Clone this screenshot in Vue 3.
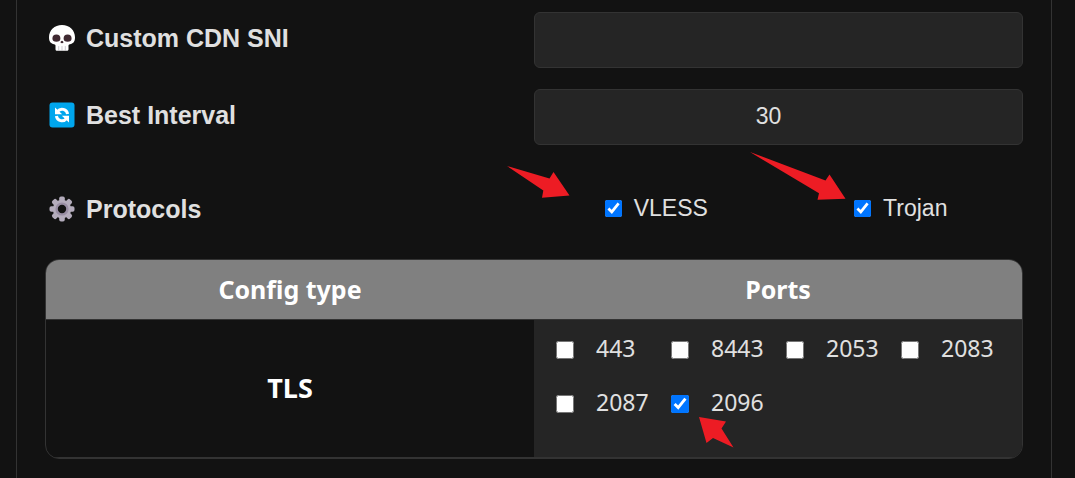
<script setup>
import { ref } from 'vue'

const cdnSni = ref('')
const bestInterval = ref('30')
const protocols = ref([
  { id: 'vless', name: 'VLESS', checked: true },
  { id: 'trojan', name: 'Trojan', checked: true },
])
const ports = ref([
  { port: '443', checked: false },
  { port: '8443', checked: false },
  { port: '2053', checked: false },
  { port: '2083', checked: false },
  { port: '2087', checked: false },
  { port: '2096', checked: true },
])
</script>

<template>
  <main class="card">
    <form class="form" @submit.prevent>
      <div class="row">
        <label class="title" for="cdn-sni">
          <svg class="icon" viewBox="0 0 26 26" aria-hidden="true">
            <path fill="#fff" d="M13 0C5.400 0 0 5.400 0 12.200c0 2.600.600 4.100 1.500 5.200 1.200 1.400 3.700 1.600 4.600 2.300.5.400.4 1.200.4 2.200v2.300c0 1 .8 1.600 1.600 1.600h9.800c.8 0 1.600-.6 1.600-1.600v-2.300c0-1-.1-1.800.4-2.200.9-.7 3.400-.9 4.600-2.300.9-1.100 1.500-2.600 1.500-5.200C26 5.400 20.600 0 13 0Z" />
            <path stroke="#b9b5bd" stroke-width=".7" stroke-linecap="round" d="M9.700 21.500v4M13 21.500v4M16.300 21.500v4" />
            <path fill="#402a32" d="M7.400 9.600a4 4 0 0 1 4 4c0 2.200-1.500 3.200-4 3.200s-4-.9-4-3.200a4 4 0 0 1 4-4ZM18.600 9.600a4 4 0 0 1 4 4c0 2.300-1.500 3.200-4 3.200s-4-1-4-3.200a4 4 0 0 1 4-4Z" />
            <path fill="#402a32" d="M13 15.800c.7 0 1.400.9 1.400 1.600s-.6 1-1.400.7c-.8.3-1.400 0-1.400-.7s.7-1.600 1.400-1.600Z" />
          </svg>
          <span>Custom CDN SNI</span>
        </label>
        <input id="cdn-sni" v-model="cdnSni" class="field" type="text" />
      </div>

      <div class="row">
        <label class="title" for="best-interval">
          <svg class="icon" viewBox="0 0 26 26" aria-hidden="true">
            <rect x=".5" y=".5" width="25" height="25" rx="3" fill="#00a6ed" />
            <g fill="none" stroke="#fff" stroke-width="3">
              <path d="M8.600 9.400A5.600 5.600 0 0 1 18.600 12" />
              <path d="M17.400 16.600A5.600 5.600 0 0 1 7.400 14" />
            </g>
            <path fill="#fff" d="M6 5.500v6.700h7.200ZM20 20.500v-6.700h-7.200Z" />
          </svg>
          <span>Best Interval</span>
        </label>
        <input id="best-interval" v-model="bestInterval" class="field numeric" type="text" inputmode="numeric" />
      </div>

      <div class="row protocols" role="group" aria-labelledby="protocols-title">
        <div id="protocols-title" class="title">
          <svg class="icon" viewBox="0 0 26 26" aria-hidden="true">
            <g fill="#b4acbc">
              <rect x="10.200" y=".5" width="5.600" height="25" rx="1.800" />
              <rect x="10.200" y=".5" width="5.600" height="25" rx="1.800" transform="rotate(45 13 13)" />
              <rect x="10.200" y=".5" width="5.600" height="25" rx="1.800" transform="rotate(90 13 13)" />
              <rect x="10.200" y=".5" width="5.600" height="25" rx="1.800" transform="rotate(135 13 13)" />
              <circle cx="13" cy="13" r="9.200" />
            </g>
            <circle cx="13" cy="13" r="5.400" fill="#121212" stroke="#998ea4" stroke-width="2.400" />
          </svg>
          <span>Protocols</span>
        </div>
        <div class="choices">
          <label v-for="item in protocols" :key="item.id" class="choice" :for="item.id">
            <input :id="item.id" v-model="item.checked" class="box" type="checkbox" />
            <span>{{ item.name }}</span>
            <svg v-if="item.id === 'vless'" class="arrow arrow-vless" viewBox="0 0 63 32" aria-hidden="true">
              <path fill="#ed1c24" d="M0 0 42.500 12.500 46.500 6 62.500 29.500 35 31.700 36.300 24.500Z" />
            </svg>
            <svg v-else class="arrow arrow-trojan" viewBox="0 0 96 48" aria-hidden="true">
              <path fill="#ed1c24" d="M0 0 75.500 28.500 79.500 22.500 95.500 46.800 67.500 47.700 69 41.300Z" />
            </svg>
          </label>
        </div>
      </div>

      <table class="ports-table">
        <thead>
          <tr>
            <th scope="col">Config type</th>
            <th scope="col">Ports</th>
          </tr>
        </thead>
        <tbody>
          <tr>
            <th scope="row" class="type">TLS</th>
            <td>
              <div class="ports">
                <label v-for="item in ports" :key="item.port" class="port" :for="`port-${item.port}`">
                  <input :id="`port-${item.port}`" v-model="item.checked" class="box" type="checkbox" />
                  <span>{{ item.port }}</span>
                  <svg v-if="item.port === '2096'" class="arrow arrow-port" viewBox="0 0 35 31" aria-hidden="true">
                    <path fill="#ed1c24" d="M0 0 27 4.500 22.500 11.500 34.500 30.500 14 21 7.500 26Z" />
                  </svg>
                </label>
              </div>
            </td>
          </tr>
        </tbody>
      </table>
    </form>
  </main>
</template>

<style>
body {
  background: #121212;
}
</style>

<style scoped>
.card {
  box-sizing: border-box;
  min-height: 100vh;
  margin: 0 23px 0 16px;
  padding: 12px 28px 18px;
  border: solid #333;
  border-width: 0 1px;
  color: #e0e0e0;
  font-family: "Liberation Sans", Arial, sans-serif;
  font-size: 23px;
}

.form {
  display: flex;
  flex-direction: column;
  gap: 21px;
}

.row {
  display: grid;
  grid-template-columns: 1fr 1fr;
  align-items: center;
}

.title {
  display: flex;
  align-items: center;
  gap: 11px;
  padding: 0 4px 4px;
  font-size: 25px;
  font-weight: bold;
  line-height: 28px;
}

.icon {
  width: 26px;
  height: 26px;
}

.field {
  box-sizing: border-box;
  width: 100%;
  height: 56px;
  padding: 0 12px 2px;
  border: 1px solid #333;
  border-radius: 6px;
  background: #252525;
  color: inherit;
  font: inherit;
  text-align: center;
}

.numeric {
  padding-right: 32px;
}

.protocols {
  min-height: 86px;
}

.protocols .title {
  padding-bottom: 0;
}

.choices {
  display: grid;
  grid-template-columns: 1fr 1fr;
  justify-items: center;
  padding-bottom: 2px;
}

.choice {
  position: relative;
  display: flex;
  align-items: center;
  gap: 12px;
  line-height: 28px;
}

.box {
  width: 17px;
  height: 17px;
  margin: 0;
}

.arrow {
  position: absolute;
  pointer-events: none;
}

.arrow-vless {
  top: -28px;
  left: -98px;
  width: 63px;
  height: 32px;
}

.arrow-trojan {
  top: -42px;
  left: -104px;
  width: 96px;
  height: 48px;
}

.ports-table {
  width: 100%;
  margin-top: -14px;
  border: 1px solid #333;
  border-radius: 14px;
  border-spacing: 0;
  table-layout: fixed;
  overflow: hidden;
  font-family: "Noto Sans", "Open Sans", sans-serif;
}

.ports-table th,
.ports-table td {
  padding: 0;
  border-bottom: 1px solid #333;
}

.ports-table th {
  padding-bottom: 2px;
  color: #fff;
  font-size: 25px;
  font-weight: bold;
}

.ports-table thead th {
  height: 57px;
  background: #808080;
}

.ports-table .type {
  font-size: 27px;
}

.ports-table td {
  background: #252525;
}

.ports {
  display: grid;
  grid-template-columns: repeat(4, 1fr);
  padding: 1px 14px 28px;
}

.port {
  position: relative;
  display: flex;
  align-items: center;
  gap: 22px;
  padding-left: 8px;
  line-height: 54px;
}

.port .box {
  width: 18px;
  height: 18px;
  margin-top: 4px;
}

.arrow-port {
  top: 42px;
  left: 36px;
  width: 35px;
  height: 31px;
}
</style>
